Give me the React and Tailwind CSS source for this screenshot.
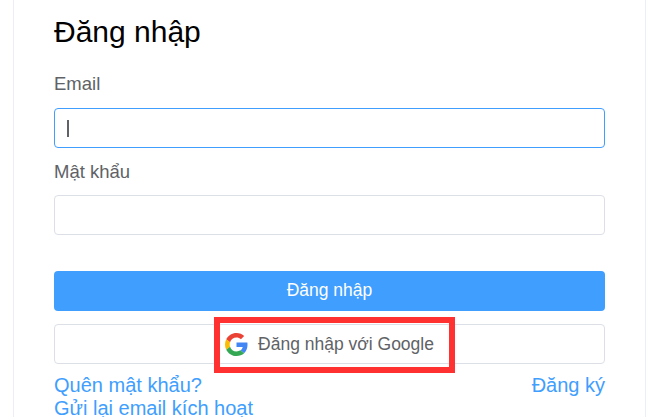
export default function App() {
  return (
    <div className="h-[417px] w-[667px] overflow-hidden bg-white font-['Liberation_Sans',Arial,sans-serif]">
      <div className="relative ml-[13px] h-[417px] w-[633px] border-x border-[#ebeef5] px-[40px] pt-[12px]">
        <h1 className="h-[40px] text-[30px] leading-[40px] text-black">Đăng nhập</h1>
        <label className="mt-[16px] block h-[40px] text-[18.5px] leading-[31px] text-[#606266]">Email</label>
        <div className="flex h-[40px] items-center rounded-[4px] border border-[#409eff] px-[12px]">
          <div className="h-[17px] w-[2px] bg-[#606266]"></div>
        </div>
        <label className="mt-[8px] block h-[39px] text-[18.5px] leading-[31px] text-[#606266]">Mật khẩu</label>
        <div className="h-[40px] rounded-[4px] border border-[#dcdfe6]"></div>
        <button className="mt-[36px] block h-[40px] w-full rounded-[4px] bg-[#409eff] pb-[2px] text-center text-[17.5px] text-white">Đăng nhập</button>
        <button className="mt-[13px] flex h-[40px] w-full items-center justify-center gap-[10px] rounded-[4px] border border-[#dcdfe6] text-[17.5px] text-[#606266]">
          <svg width="23" height="23" viewBox="0 0 48 48">
            <path fill="#EA4335" d="M24 9.5c3.54 0 6.71 1.22 9.21 3.6l6.85-6.85C35.9 2.38 30.47 0 24 0 14.62 0 6.51 5.38 2.56 13.22l7.98 6.19C12.43 13.72 17.74 9.5 24 9.5z" />
            <path fill="#4285F4" d="M46.98 24.55c0-1.57-.15-3.09-.38-4.55H24v9.02h12.94c-.58 2.96-2.26 5.48-4.78 7.18l7.73 6c4.51-4.18 7.09-10.36 7.09-17.65z" />
            <path fill="#FBBC05" d="M10.53 28.59c-.48-1.45-.76-2.99-.76-4.59s.27-3.14.76-4.59l-7.98-6.19C.92 16.46 0 20.12 0 24c0 3.88.92 7.54 2.56 10.78l7.97-6.19z" />
            <path fill="#34A853" d="M24 48c6.48 0 11.93-2.13 15.89-5.81l-7.73-6c-2.15 1.45-4.92 2.3-8.16 2.3-6.26 0-11.57-4.22-13.47-9.91l-7.98 6.19C6.51 42.62 14.62 48 24 48z" />
          </svg>
          <span>Đăng nhập với Google</span>
        </button>
        <div className="mt-[9px] flex justify-between text-[20px] leading-[24px] text-[#409eff]">
          <a>Quên mật khẩu?</a>
          <a>Đăng ký</a>
        </div>
        <a className="block text-[20px] leading-[22px] text-[#409eff]">Gửi lại email kích hoạt</a>
        <div className="absolute left-[200px] top-[317px] h-[56px] w-[241px] border-[6px] border-[#ff3131]"></div>
      </div>
    </div>
  );
}
